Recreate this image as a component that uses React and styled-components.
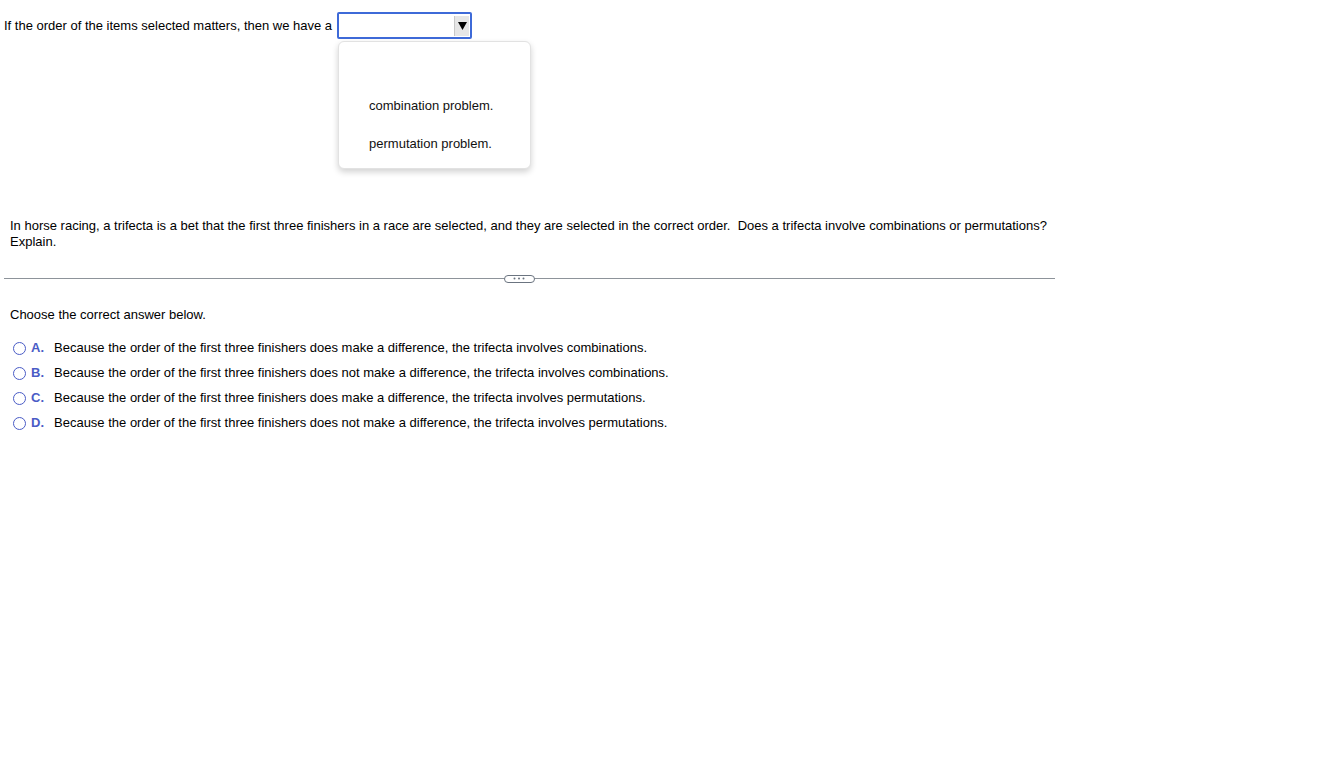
import React from 'react'
import styled, { createGlobalStyle } from 'styled-components'

const GlobalStyle = createGlobalStyle`
  body {
    margin: 0;
    background: #fff;
    font-family: "Liberation Sans", Arial, sans-serif;
    font-size: 13px;
    color: #000;
  }
`

const options = [
  { letter: 'A.', text: 'Because the order of the first three finishers does make a difference, the trifecta involves combinations.' },
  { letter: 'B.', text: 'Because the order of the first three finishers does not make a difference, the trifecta involves combinations.' },
  { letter: 'C.', text: 'Because the order of the first three finishers does make a difference, the trifecta involves permutations.' },
  { letter: 'D.', text: 'Because the order of the first three finishers does not make a difference, the trifecta involves permutations.' },
]

const App = () => {
  return (
    <Page>
      <GlobalStyle />
      <TopLine>
        <span>If the order of the items selected matters, then we have a</span>
        <SelectWrap>
          <SelectBox>
            <ArrowButton>
              <svg width="9" height="9" viewBox="0 0 9 9">
                <polygon points="0,1 9,1 4.5,9" fill="#000" />
              </svg>
            </ArrowButton>
          </SelectBox>
          <Menu>
            <MenuItem>combination problem.</MenuItem>
            <MenuItem>permutation problem.</MenuItem>
          </Menu>
        </SelectWrap>
      </TopLine>

      <Question>
        In horse racing, a trifecta is a bet that the first three finishers in a race are selected, and they are selected in the correct order.&nbsp; Does a trifecta involve combinations or permutations?
        <br />
        Explain.
      </Question>

      <Divider>
        <Pill>
          <svg width="12" height="3" viewBox="0 0 12 3">
            <circle cx="1.5" cy="1.5" r="1" fill="#6b7480" />
            <circle cx="6" cy="1.5" r="1" fill="#6b7480" />
            <circle cx="10.5" cy="1.5" r="1" fill="#6b7480" />
          </svg>
        </Pill>
      </Divider>

      <Prompt>Choose the correct answer below.</Prompt>
      <OptionList>
        {options.map((o) => (
          <Option key={o.letter}>
            <Radio />
            <Letter>{o.letter}</Letter>
            <span>{o.text}</span>
          </Option>
        ))}
      </OptionList>
    </Page>
  )
}

export default App

const Page = styled.div`
  width: 1327px;
  height: 776px;
  position: relative;
`

const TopLine = styled.div`
  display: flex;
  align-items: center;
  padding: 12px 0 0 4px;
  height: 27px;
  gap: 5px;
`

const SelectWrap = styled.div`
  position: relative;
`

const SelectBox = styled.div`
  width: 130px;
  height: 23px;
  border: 2px solid #3e6ad8;
  border-radius: 2px;
  display: flex;
  justify-content: flex-end;
  align-items: center;
  padding-right: 1px;
  box-sizing: content-box;
`

const ArrowButton = styled.div`
  width: 14px;
  height: 20px;
  background: #e6e6e6;
  border-left: 1px solid #c8c8c8;
  display: flex;
  align-items: center;
  justify-content: center;
`

const Menu = styled.div`
  position: absolute;
  top: 29px;
  left: 1px;
  width: 193px;
  height: 128px;
  box-sizing: border-box;
  background: #fff;
  border: 1px solid #e2e2e2;
  border-radius: 6px;
  box-shadow: 0 3px 6px rgba(0, 0, 0, 0.18);
  padding: 56px 0 0 30px;
  display: flex;
  flex-direction: column;
  gap: 23px;
  z-index: 2;
`

const MenuItem = styled.div`
  font-size: 13px;
  line-height: 15px;
  color: #111;
`

const Question = styled.p`
  margin: 179px 0 0 10px;
  width: 1060px;
  line-height: 16px;
`

const Divider = styled.div`
  margin: 28px 0 0 4px;
  width: 1051px;
  height: 1px;
  background: #8d939a;
  display: flex;
  justify-content: center;
  align-items: center;
`

const Pill = styled.div`
  width: 31px;
  height: 8px;
  box-sizing: border-box;
  border: 1px solid #6b7480;
  border-radius: 4px;
  background: #fff;
  display: flex;
  align-items: center;
  justify-content: center;
  margin-right: 21px;
`

const Prompt = styled.p`
  margin: 28px 0 0 10px;
  line-height: 16px;
`

const OptionList = styled.div`
  margin: 17px 0 0 13px;
  display: flex;
  flex-direction: column;
  gap: 9px;
`

const Option = styled.div`
  display: flex;
  align-items: center;
  line-height: 16px;
`

const Radio = styled.span`
  width: 13px;
  height: 13px;
  box-sizing: border-box;
  border: 1.5px solid #4a5cc6;
  border-radius: 50%;
  margin-right: 5px;
`

const Letter = styled.span`
  color: #4a5cc6;
  font-weight: bold;
  width: 23px;
`
